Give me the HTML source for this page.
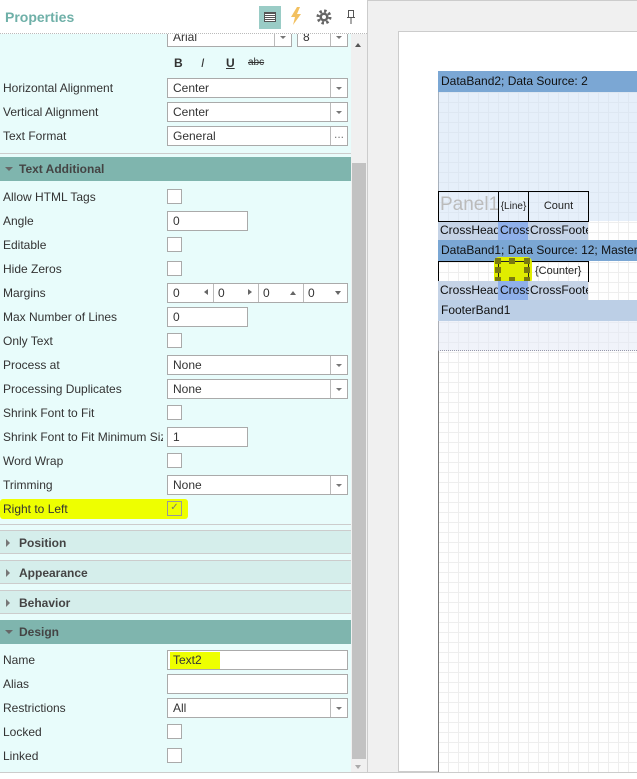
<!DOCTYPE html>
<html><head><meta charset="utf-8"><style>
*{box-sizing:border-box;margin:0;padding:0}
body{width:637px;height:779px;overflow:hidden;background:#f0f0f0;font-family:"Liberation Sans",sans-serif;font-size:12px;color:#333;position:relative}
.a{position:absolute}
#panel{left:0;top:0;width:351px;height:772px;background:#e8fcfb;overflow:hidden}
.lbl{position:absolute;left:3px;height:24px;line-height:26px;white-space:nowrap;width:160px;overflow:hidden}
.inp{position:absolute;left:167px;width:181px;height:20px;background:#fff;border:1px solid #aaa;padding-left:5px;line-height:19px}
.dd:after{content:"";position:absolute;right:16px;top:0;height:18px;border-left:1px solid #bbb}
.dd:before{content:"";position:absolute;right:5px;top:8px;border:3px solid transparent;border-top:3px solid #777}
.sh{width:81px}
.cb{position:absolute;left:167px;width:15px;height:15px;background:#fff;border:1px solid #aaa}
.hd{position:absolute;left:0;width:351px;height:24px;line-height:24px;padding-left:19px;font-weight:bold;color:#444;font-size:12px}
.open{background:#7fb5ae}
.open:before{content:"";position:absolute;left:5px;top:10px;border:4px solid transparent;border-top:4px solid #666}
.cl{background:#d5eeeb;border-top:1px solid #ccc;border-bottom:1px solid #ccc}
.cl:before{content:"";position:absolute;left:6px;top:8px;border:4px solid transparent;border-left:4px solid #777}
.grid{background-color:#fff;background-image:repeating-linear-gradient(90deg,transparent 0 9px,#eeeeee 9px 10px),repeating-linear-gradient(0deg,transparent 0 9px,#eeeeee 9px 10px)}
.cell{position:absolute;border:1px solid #000;text-align:center;font-size:11px;color:#222}
.ar{position:absolute;top:5px;width:0;height:0}
</style></head><body>
<div id="panel" class="a">
  <div class="inp dd" style="top:27px;width:125px">Arial</div>
  <div class="inp dd" style="left:297px;top:27px;width:51px">8</div>
  <div class="a" style="left:174px;top:56px;font-weight:bold">B</div>
  <div class="a" style="left:201px;top:56px;font-style:italic">I</div>
  <div class="a" style="left:226px;top:56px;text-decoration:underline;font-weight:bold">U</div>
  <div class="a" style="left:248px;top:57px;font-size:10px;text-decoration:line-through">abc</div>
  <div class="lbl" style="top:75px">Horizontal Alignment</div><div class="inp dd" style="top:78px">Center</div>
  <div class="lbl" style="top:99px">Vertical Alignment</div><div class="inp dd" style="top:102px">Center</div>
  <div class="lbl" style="top:123px">Text Format</div><div class="inp" style="top:126px">General<span class="a" style="right:0;top:0;width:17px;height:18px;border-left:1px solid #bbb;text-align:center;line-height:14px;color:#777">...</span></div>
  <div class="a" style="left:0;top:153px;width:351px;border-top:1px solid #ccc"></div>
  <div class="hd open" style="top:157px">Text Additional</div>
  <div class="lbl" style="top:184px">Allow HTML Tags</div><div class="cb" style="top:189px"></div>
  <div class="lbl" style="top:208px">Angle</div><div class="inp sh" style="top:211px">0</div>
  <div class="lbl" style="top:232px">Editable</div><div class="cb" style="top:237px"></div>
  <div class="lbl" style="top:256px">Hide Zeros</div><div class="cb" style="top:261px"></div>
  <div class="lbl" style="top:280px">Margins</div>
  <div class="inp" style="top:283px;padding:0">
    <span class="a" style="left:5px">0</span><span class="ar" style="left:33px;border:3px solid transparent;border-right:4px solid #666"></span>
    <span class="a" style="left:45px;top:0;height:18px;border-left:1px solid #bbb;padding-left:4px">0</span><span class="ar" style="left:80px;border:3px solid transparent;border-left:4px solid #666"></span>
    <span class="a" style="left:90px;top:0;height:18px;border-left:1px solid #bbb;padding-left:4px">0</span><span class="ar" style="left:122px;top:4px;border:3px solid transparent;border-bottom:4px solid #666"></span>
    <span class="a" style="left:135px;top:0;height:18px;border-left:1px solid #bbb;padding-left:4px">0</span><span class="ar" style="left:167px;top:7px;border:3px solid transparent;border-top:4px solid #666"></span>
  </div>
  <div class="lbl" style="top:304px">Max Number of Lines</div><div class="inp sh" style="top:307px">0</div>
  <div class="lbl" style="top:328px">Only Text</div><div class="cb" style="top:333px"></div>
  <div class="lbl" style="top:352px">Process at</div><div class="inp dd" style="top:355px">None</div>
  <div class="lbl" style="top:376px">Processing Duplicates</div><div class="inp dd" style="top:379px">None</div>
  <div class="lbl" style="top:400px">Shrink Font to Fit</div><div class="cb" style="top:405px"></div>
  <div class="lbl" style="top:424px">Shrink Font to Fit Minimum Size</div><div class="inp sh" style="top:427px">1</div>
  <div class="lbl" style="top:448px">Word Wrap</div><div class="cb" style="top:453px"></div>
  <div class="lbl" style="top:472px">Trimming</div><div class="inp dd" style="top:475px">None</div>
  <div class="a" style="left:0;top:499px;width:188px;height:20px;background:#eeff00;border-radius:3px"></div>
  <div class="lbl" style="top:496px">Right to Left</div>
  <div class="cb" style="top:501px;background:#eeff00;border-color:#999;color:#777;font-size:10px;text-align:center;line-height:12px">&#10003;</div>
  <div class="a" style="left:0;top:524px;width:351px;border-top:1px solid #ccc"></div>
  <div class="hd cl" style="top:530px">Position</div>
  <div class="hd cl" style="top:560px">Appearance</div>
  <div class="hd cl" style="top:590px">Behavior</div>
  <div class="hd open" style="top:620px">Design</div>
  <div class="lbl" style="top:647px">Name</div><div class="inp" style="top:650px"><span style="background:#eeff00;padding:1px 18px 2px 3px;margin-left:-3px">Text2</span></div>
  <div class="lbl" style="top:671px">Alias</div><div class="inp" style="top:674px"></div>
  <div class="lbl" style="top:695px">Restrictions</div><div class="inp dd" style="top:698px">All</div>
  <div class="lbl" style="top:719px">Locked</div><div class="cb" style="top:724px"></div>
  <div class="lbl" style="top:743px">Linked</div><div class="cb" style="top:748px"></div>
</div>
<div class="a" style="left:0;top:0;width:367px;height:34px;background:#fff;border-bottom:1px dotted #bbb"></div>
<div class="a" style="left:5px;top:9px;font-size:14px;font-weight:bold;color:#6fb0a8">Properties</div>
<div class="a" style="left:259px;top:6px;width:22px;height:23px;background:#9accc6">
  <div class="a" style="left:5px;top:6px;width:12px;height:10px;border:1px solid #555;background:repeating-linear-gradient(0deg,#fff 0 1px,#555 1px 2px)"></div>
</div>
<svg class="a" style="left:290px;top:7px" width="12" height="18" viewBox="0 0 12 18"><polygon points="7,0 1,10 5,10 3,18 11,7 7,7 10,0" fill="#f2c060"/></svg>
<svg class="a" style="left:316px;top:9px" width="16" height="16" viewBox="0 0 16 16"><circle cx="8" cy="8" r="6" fill="none" stroke="#666" stroke-width="3" stroke-dasharray="2.4 2.3"/><circle cx="8" cy="8" r="4.5" fill="#666"/><circle cx="8" cy="8" r="2" fill="#fff"/></svg>
<svg class="a" style="left:346px;top:10px" width="10" height="14" viewBox="0 0 10 14"><rect x="2.5" y="0.5" width="5" height="7" fill="none" stroke="#555"/><line x1="1" y1="7.5" x2="9" y2="7.5" stroke="#555"/><line x1="5" y1="8" x2="5" y2="14" stroke="#555"/></svg>
<div class="a" style="left:351px;top:34px;width:16px;height:738px;background:#f0f0f0"></div>
<div class="a" style="left:355px;top:40px;border:3px solid transparent;border-bottom:4px solid #555"></div>
<div class="a" style="left:352px;top:163px;width:14px;height:596px;background:#c2c2c2"></div>
<div class="a" style="left:355px;top:765px;border:3px solid transparent;border-top:4px solid #aaa"></div>
<div class="a" style="left:367px;top:0;width:1px;height:772px;background:#ccc"></div>
<div class="a" style="left:368px;top:0;width:269px;height:1px;background:#ccc"></div>
<!-- page -->
<div class="a" style="left:398px;top:31px;width:239px;height:741px;background:#fff;border:1px solid #ccc;border-right:none"></div>
<div class="a grid" style="left:438px;top:71px;width:199px;height:701px;border-left:1px solid #777"></div>
<div class="a" style="left:438px;top:71px;width:199px;height:21px;background:#7ba7d4;line-height:21px;padding-left:3px;color:#111">DataBand2; Data Source: 2</div>
<div class="a" style="left:438px;top:92px;width:199px;height:129px;background:rgba(210,225,245,.55)"></div>
<div class="a" style="left:438px;top:221px;width:150px;height:19px;background:#c5d3e6"></div>
<div class="a" style="left:498px;top:221px;width:30px;height:19px;background:#8fb0ea"></div>
<div class="a" style="left:438px;top:221px;width:150px;height:19px;line-height:19px;white-space:nowrap;overflow:hidden;color:#111"><span class="a" style="left:2px;width:58px;overflow:hidden">CrossHeader</span><span class="a" style="left:62px;width:29px;overflow:hidden">Cross</span><span class="a" style="left:92px;width:58px;overflow:hidden">CrossFooter</span></div>
<div class="cell" style="left:438px;top:191px;width:61px;height:31px;text-align:left;font-size:19px;color:#bbb;line-height:26px;padding-left:1px">Panel1</div>
<div class="cell" style="left:498px;top:191px;width:31px;height:31px;line-height:29px;font-size:10px">{Line}</div>
<div class="cell" style="left:528px;top:191px;width:61px;height:31px;line-height:29px">Count</div>
<div class="a" style="left:438px;top:240px;width:199px;height:21px;background:#7ba7d4;line-height:21px;padding-left:3px;color:#111;white-space:nowrap">DataBand1; Data Source: 12; Master</div>
<div class="cell" style="left:438px;top:261px;width:151px;height:21px"></div>
<div class="a" style="left:494px;top:257px;width:38px;height:27px;background:#e0ec00;border-radius:5px"></div>
<div class="a" style="left:498px;top:261px;width:31px;height:21px;border:1px solid #222"></div>
<svg class="a" style="left:495px;top:258px" width="38" height="28"><g fill="#7a7a10"><rect x="0" y="0" width="6" height="6"/><rect x="14" y="0" width="6" height="6"/><rect x="29" y="0" width="6" height="6"/><rect x="0" y="9" width="6" height="6"/><rect x="29" y="9" width="6" height="6"/><rect x="0" y="19" width="6" height="6"/><rect x="14" y="19" width="6" height="6"/><rect x="29" y="19" width="6" height="6"/></g></svg>
<div class="a" style="left:535px;top:265px;font-size:11px;color:#222">{Counter}</div>
<div class="a" style="left:438px;top:281px;width:150px;height:19px;background:#c5d3e6"></div>
<div class="a" style="left:498px;top:281px;width:30px;height:19px;background:#8fb0ea"></div>
<div class="a" style="left:438px;top:281px;width:150px;height:19px;line-height:19px;white-space:nowrap;overflow:hidden;color:#111"><span class="a" style="left:2px;width:58px;overflow:hidden">CrossHeader</span><span class="a" style="left:62px;width:29px;overflow:hidden">Cross</span><span class="a" style="left:92px;width:58px;overflow:hidden">CrossFooter</span></div>
<div class="a" style="left:438px;top:300px;width:199px;height:21px;background:#bccfe6;line-height:21px;padding-left:3px;color:#111">FooterBand1</div>
<div class="a" style="left:438px;top:321px;width:199px;height:30px;background:rgba(225,232,245,.5);border-bottom:1px dotted #99a"></div>
<div class="a" style="left:0;top:772px;width:637px;height:7px;background:#fff;border-top:1px solid #ccc"></div>
</body></html>
